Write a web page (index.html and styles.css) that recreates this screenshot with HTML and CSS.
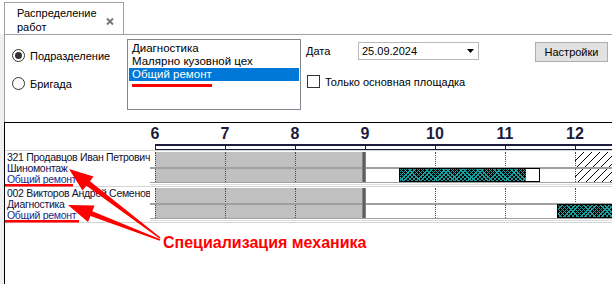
FILE: index.html
```html
<!DOCTYPE html>
<html lang="ru">
<head>
    <meta charset="UTF-8">
    <title>Распределение работ</title>
    <link rel="stylesheet" href="styles.css">
</head>
<body>
    <div class="tabbar">
        <div class="tab">
            <span class="tab-title">Распределение<br>работ</span>
            <svg class="tab-close" width="8" height="7" viewBox="0 0 8 7"><path d="M1 0.5 L7 6.5 M7 0.5 L1 6.5" stroke="#777" stroke-width="2"/></svg>
        </div>
    </div>
    <div class="workspace">
        <div class="filters">
            <div class="radios">
                <label class="radio"><span class="radio-dot checked"></span>Подразделение</label>
                <label class="radio"><span class="radio-dot"></span>Бригада</label>
            </div>
            <div class="listbox">
                <div class="list-item">Диагностика</div>
                <div class="list-item">Малярно кузовной цех</div>
                <div class="list-item selected">Общий ремонт</div>
            </div>
            <div class="date-col">
                <div class="date-row">
                    <span class="date-label">Дата</span>
                    <div class="combo">
                        <span>25.09.2024</span>
                        <svg width="7" height="4" viewBox="0 0 7 4"><polygon points="0,0 7,0 3.5,4" fill="#000"/></svg>
                    </div>
                </div>
                <label class="check"><span class="check-box"></span>Только основная площадка</label>
            </div>
            <button class="settings">Настройки</button>
        </div>

        <div class="chart">
            <div class="scale-labels">
                <span class="hour-label">6</span>
                <span class="hour-label">7</span>
                <span class="hour-label">8</span>
                <span class="hour-label">9</span>
                <span class="hour-label">10</span>
                <span class="hour-label">11</span>
                <span class="hour-label">12</span>
            </div>
            <div class="ruler"></div>
            <div class="rows">
                <div class="row">
                    <div class="row-label">
                        <div class="person">321 Продавцов Иван Петрович</div>
                        <div class="spec">Шиномонтаж</div>
                        <div class="dept">Общий ремонт</div>
                    </div>
                    <div class="track">
                        <div class="lanes">
                            <div class="off-hours" style="left: 5px; width: 207px;"></div>
                            <div class="hatch" style="left: 425px; width: 100px;"></div>
                            <div class="grid"><span></span><span></span><span></span><span></span><span></span><span></span><span></span></div>
                            <div class="lane-divider"></div>
                            <div class="day-mark" style="left: 212px;"></div>
                            <div class="job" style="left: 249px; width: 141px;"><div class="job-fill" style="width: 126px;"></div></div>
                        </div>
                    </div>
                </div>
                <div class="row">
                    <div class="row-label">
                        <div class="person">002 Викторов Андрей Семенов</div>
                        <div class="spec">Диагностика</div>
                        <div class="dept">Общий ремонт</div>
                    </div>
                    <div class="track">
                        <div class="lanes">
                            <div class="off-hours" style="left: 5px; width: 207px;"></div>
                            <div class="grid"><span></span><span></span><span></span><span></span><span></span><span></span><span></span></div>
                            <div class="lane-divider"></div>
                            <div class="day-mark" style="left: 212px;"></div>
                            <div class="job" style="left: 407px; width: 100px;"><div class="job-fill" style="width: 100%;"></div></div>
                        </div>
                    </div>
                </div>
            </div>
        </div>
    </div>

    <!-- red markup drawn over the screenshot -->
    <svg class="annotations" width="612" height="284" viewBox="0 0 612 284">
        <g fill="#ff0000" stroke="none">
            <rect x="132" y="84" width="80" height="3"/>
            <rect x="5" y="184" width="68" height="2.5"/>
            <rect x="5" y="220" width="74" height="2.5"/>
            <polygon points="69,169 93.5,176.5 90,181.3 160.5,237.4 159.5,238.6 86.4,185.7 82.5,190.5"/>
            <polygon points="68,205 94.5,205.5 92.3,211.3 160.3,239.3 159.7,240.7 90.5,215.9 88,222"/>
        </g>
    </svg>
    <div class="callout">Специализация механика</div>
</body>
</html>
```

FILE: styles.css
```css
* {
    margin: 0;
    padding: 0;
    box-sizing: border-box;
}
html, body {
    width: 612px;
    height: 284px;
    overflow: hidden;
}
body {
    position: relative;
    display: flex;
    flex-direction: column;
    background-color: #f0f0f0;
    font-family: 'Liberation Sans', sans-serif;
    font-size: 11px;
    color: #000;
}
.tabbar {
    height: 34px;
    flex: none;
    display: flex;
    padding: 2px 0 0 4px;
    background: #fff;
}
.tab {
    width: 120px;
    height: 32px;
    display: flex;
    align-items: center;
    justify-content: space-between;
    padding: 2px 9px 0 12px;
    border: 1px solid #a0a0a0;
    border-bottom: none;
    background: #fff;
    line-height: 14px;
}
.tab-close {
    margin-top: 4px;
}
.workspace {
    flex: 1;
    display: flex;
    flex-direction: column;
    margin-left: 4px;
    border-top: 1px solid #a0a0a0;
    border-left: 1px solid #a0a0a0;
    background: #fff;
}
.filters {
    height: 87px;
    flex: none;
    display: flex;
    align-items: flex-start;
}
.radios {
    width: 115px;
    margin: 14px 0 0 7px;
    display: flex;
    flex-direction: column;
    gap: 15px;
}
.radio, .check {
    display: flex;
    align-items: center;
    gap: 5px;
    height: 13px;
    white-space: nowrap;
}
.radio-dot {
    width: 13px;
    height: 13px;
    flex: none;
    border: 1px solid #333;
    border-radius: 50%;
    display: flex;
    align-items: center;
    justify-content: center;
}
.radio-dot.checked::after {
    content: '';
    width: 7px;
    height: 7px;
    border-radius: 50%;
    background: #333;
}
.listbox {
    width: 174px;
    height: 71px;
    margin-top: 4px;
    padding: 2px 1px 0;
    border: 1px solid #828790;
}
.list-item {
    height: 13px;
    line-height: 13px;
    padding-left: 3px;
    white-space: nowrap;
    font-size: 11.5px;
}
.list-item.selected {
    background: #0078d7;
    color: #fff;
}
.date-col {
    margin: 7px 0 0 5px;
}
.date-row {
    display: flex;
    align-items: center;
}
.date-label {
    width: 52px;
}
.combo {
    width: 121px;
    height: 18px;
    display: flex;
    align-items: center;
    justify-content: space-between;
    padding: 0 4px 0 3px;
    border: 1px solid #b9b9b9;
}
.check {
    margin: 15px 0 0 1px;
}
.check-box {
    width: 13px;
    height: 13px;
    flex: none;
    border: 1px solid #333;
}
.settings {
    width: 73px;
    height: 20px;
    margin: 7px 4px 0 auto;
    border: 1px solid #adadad;
    background: #e1e1e1;
    font: inherit;
}
.chart {
    flex: 1;
    margin-left: -1px;
    border-top: 1px solid #000;
    border-left: 1px solid #000;
    background: #fff;
}
.scale-labels {
    height: 21px;
    display: flex;
    padding: 2px 0 0 115px;
}
.hour-label {
    flex: 0 0 70px;
    text-align: center;
    font: bold 16px/18px 'Liberation Sans', sans-serif;
    color: #1c1c3c;
}
.ruler {
    height: 6px;
    margin-left: 150px;
    border-top: 2px solid #1c1c3c;
    border-bottom: 1px solid #1c1c3c;
    background: repeating-linear-gradient(to right, #1c1c3c 0 1px, transparent 1px 70px);
}
.rows {
    border-top: 1px solid #d4d4d4;
}
.row {
    height: 36px;
    display: flex;
    border-bottom: 1px solid #d4d4d4;
}
.row-label {
    width: 145px;
    flex: none;
    padding: 1px 0 0 2px;
    font-size: 10.5px;
    line-height: 11px;
    letter-spacing: -0.3px;
    white-space: nowrap;
    overflow: hidden;
    color: #10104a;
}
.row-label .person {
    color: #101030;
}
.row-label .dept {
    color: #1c2a8c;
}
.track {
    flex: 1;
    padding-top: 1px;
    background: linear-gradient(#dcdcdc, #dcdcdc) 0 33px / 100% 1px no-repeat;
}
.lanes {
    position: relative;
    height: 31px;
    border-bottom: 1px solid #a0a0a0;
    overflow: hidden;
}
.off-hours {
    position: absolute;
    top: 0;
    bottom: 0;
    background: #c0c0c0;
}
.hatch {
    position: absolute;
    top: 0;
    bottom: 0;
    background: repeating-linear-gradient(135deg, #000 0 1px, #fff 1px 5.66px);
}
.grid {
    position: absolute;
    inset: 0;
    display: flex;
    padding-left: 5px;
}
.grid span {
    flex: 0 0 70px;
    border-left: 1px dotted #4a4a4a;
}
.lane-divider {
    position: absolute;
    left: 0;
    right: 0;
    top: 15px;
    height: 2px;
    background: #a0a0a0;
}
.day-mark {
    position: absolute;
    top: 0;
    bottom: 0;
    width: 4px;
    background: #5e5e5e;
    border-left: 1px solid #858585;
    border-right: 1px solid #858585;
}
.job {
    position: absolute;
    top: 16px;
    height: 14px;
    border: 1px solid #000;
    background: #fff;
}
.job-fill {
    height: 100%;
    background:
        repeating-linear-gradient(45deg, transparent 0 2px, #17a0a0 2px 3px),
        repeating-linear-gradient(-45deg, transparent 0 2px, #17a0a0 2px 3px),
        #000;
}
.annotations {
    position: absolute;
    top: 0;
    left: 0;
    pointer-events: none;
}
.callout {
    position: absolute;
    left: 163px;
    top: 234px;
    font: bold 16px 'Liberation Sans', sans-serif;
    color: #ff0000;
    white-space: nowrap;
}
```
